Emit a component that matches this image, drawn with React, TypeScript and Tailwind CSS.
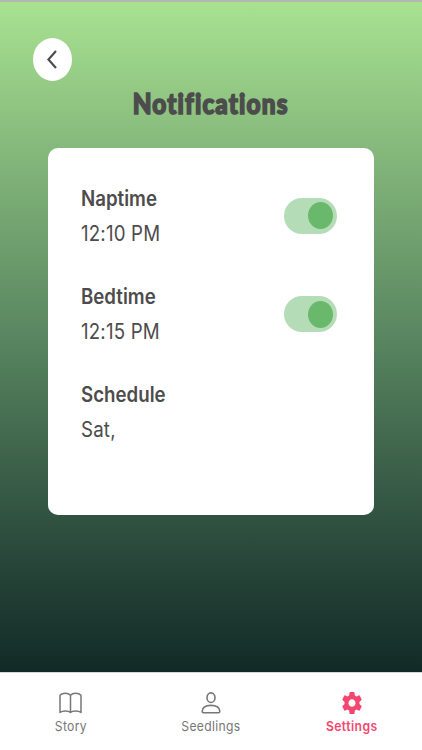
import type { ReactNode } from 'react';

interface Reminder {
  label: string;
  value: string;
  enabled?: boolean;
}

const REMINDERS: Reminder[] = [
  { label: 'Naptime', value: '12:10 PM', enabled: true },
  { label: 'Bedtime', value: '12:15 PM', enabled: true },
  { label: 'Schedule', value: 'Sat,' },
];

function Toggle() {
  return (
    <button
      role="switch"
      aria-checked
      className="mt-[17px] flex h-[36.5px] w-[53px] items-center justify-end rounded-[18px] bg-[#b4ddb7] pr-1"
    >
      <span className="block h-[27px] w-[25px] rounded-[50%] bg-[#69b86c]" />
    </button>
  );
}

function ReminderRow({ label, value, enabled }: Reminder) {
  return (
    <div className="flex h-[98.2px] items-start justify-between">
      <div className="origin-left scale-x-[0.89] whitespace-nowrap text-[#4c4c4c]">
        <p className="text-[21px] leading-[35px] font-semibold">{label}</p>
        <p className="text-[21px] leading-[35px] tracking-[0.2px]">{value}</p>
      </div>
      {enabled && <Toggle />}
    </div>
  );
}

function Tab({ label, active = false, children }: { label: string; active?: boolean; children: ReactNode }) {
  return (
    <div className={`flex flex-1 flex-col items-center pt-[18.5px] ${active ? 'text-[#f4476f]' : 'text-[#777777]'}`}>
      {children}
      <span className={`mt-[4.5px] scale-x-[0.9] text-[13.5px] leading-4 ${active ? 'font-semibold tracking-[0.5px]' : 'tracking-[0.35px]'}`}>
        {label}
      </span>
    </div>
  );
}

export default function App() {
  return (
    <div className="flex h-[750px] w-[422px] flex-col overflow-hidden border-t-2 border-[#b5b5b5] bg-white font-['Inter',sans-serif]">
      <main className="h-[670px] bg-linear-to-b from-[#a9e291] via-[#598660] to-[#122a27]">
        <button aria-label="Back" className="mt-9 ml-[32.5px] flex h-[43px] w-[39px] items-center justify-center rounded-[50%] bg-white">
          <svg width="10" height="19" viewBox="0 0 10 19" fill="none" stroke="#4c4c4c" strokeWidth="2.2">
            <path d="M9 1 1.4 9.5 9 18" />
          </svg>
        </button>

        <h1 className="mt-[2px] flex h-[40px] items-center justify-center font-['Lato',sans-serif] text-[28px] font-black text-[#4c4c4c]">
          <span className="scale-x-[0.87] tracking-[1.3px] [-webkit-text-stroke:1.6px_#4c4c4c] [font-variant-ligatures:none]">
            Notifications
          </span>
        </h1>

        <section className="mx-12 mt-[24.6px] h-[367px] w-[326px] rounded-[10px] bg-white pt-[33px] pr-[37px] pl-[33px]">
          {REMINDERS.map((r) => (
            <ReminderRow key={r.label} {...r} />
          ))}
        </section>
      </main>

      <nav className="flex flex-1 border-t border-[#d8d8d8] bg-white">
        <Tab label="Story">
          <svg width="23" height="22" viewBox="0 0 23 22" fill="none" stroke="currentColor" strokeWidth="1.5" strokeLinejoin="round">
            <path d="M11.5 3.2C9.3.7 3.5.7 1 3.2V20.5C3.5 18.5 9.3 18.5 11.5 20.5 13.7 18.5 19.5 18.5 22 20.5V3.2C19.5.7 13.7.7 11.5 3.2V20.5" />
          </svg>
        </Tab>
        <Tab label="Seedlings">
          <svg width="20" height="22" viewBox="0 0 20 22" fill="none" stroke="currentColor" strokeWidth="1.6">
            <ellipse cx="10" cy="5.7" rx="4" ry="4.8" />
            <path d="M1.2 19.2C1.5 15.4 5.2 13.4 10 13.4S18.5 15.4 18.8 19.2Q18.8 20.7 17.5 20.7H2.5Q1.2 20.7 1.2 19.2Z" />
          </svg>
        </Tab>
        <Tab label="Settings" active>
          <svg width="20" height="22" viewBox="2 2 20 20" preserveAspectRatio="none" fill="currentColor">
            <path d="M19.43 12.98c.04-.32.07-.64.07-.98s-.03-.66-.07-.98l2.11-1.65c.19-.15.24-.42.12-.64l-2-3.46c-.12-.22-.39-.3-.61-.22l-2.49 1c-.52-.4-1.08-.73-1.69-.98l-.38-2.65C14.46 2.18 14.25 2 14 2h-4c-.25 0-.46.18-.49.42l-.38 2.65c-.61.25-1.17.59-1.69.98l-2.49-1c-.23-.09-.49 0-.61.22l-2 3.46c-.13.22-.07.49.12.64l2.11 1.65c-.04.32-.07.65-.07.98s.03.66.07.98l-2.11 1.65c-.19.15-.24.42-.12.64l2 3.46c.12.22.39.3.61.22l2.49-1c.52.4 1.08.73 1.69.98l.38 2.65c.03.24.24.42.49.42h4c.25 0 .46-.18.49-.42l.38-2.65c.61-.25 1.17-.59 1.69-.98l2.49 1c.23.09.49 0 .61-.22l2-3.46c.12-.22.07-.49-.12-.64l-2.11-1.65zM12 15.5c-1.93 0-3.5-1.57-3.5-3.5s1.57-3.5 3.5-3.5 3.5 1.57 3.5 3.5-1.57 3.5-3.5 3.5z" />
          </svg>
        </Tab>
      </nav>
    </div>
  );
}
